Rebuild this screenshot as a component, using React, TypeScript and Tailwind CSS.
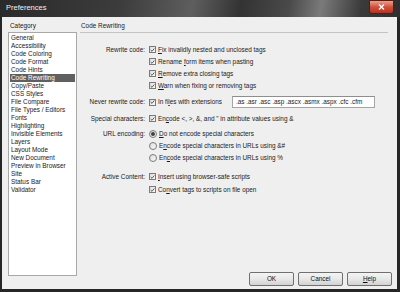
import type { ReactNode } from 'react';

const CATEGORIES = [
  'General',
  'Accessibility',
  'Code Coloring',
  'Code Format',
  'Code Hints',
  'Code Rewriting',
  'Copy/Paste',
  'CSS Styles',
  'File Compare',
  'File Types / Editors',
  'Fonts',
  'Highlighting',
  'Invisible Elements',
  'Layers',
  'Layout Mode',
  'New Document',
  'Preview in Browser',
  'Site',
  'Status Bar',
  'Validator',
];

function Check() {
  return (
    <span className="w-[7px] h-[7px] shrink-0 border border-[#7a7a7a] bg-gradient-to-br from-[#dcdcdc] to-[#fbfbfb] flex items-center justify-center">
      <svg width="6" height="6" viewBox="0 0 6 6">
        <path d="M0.8 3 L2.4 4.6 L5.2 1.2" fill="none" stroke="#3a3a3a" strokeWidth="1" />
      </svg>
    </span>
  );
}

function Radio({ on }: { on?: boolean }) {
  return (
    <span className="w-[8px] h-[8px] shrink-0 rounded-full border border-[#7a7a7a] bg-gradient-to-br from-[#dcdcdc] to-[#fbfbfb] flex items-center justify-center">
      {on && <span className="w-[4px] h-[4px] rounded-full bg-[#404040]" />}
    </span>
  );
}

function Row({ label, top, children }: { label?: string; top: string; children: ReactNode }) {
  return (
    <div className={`flex items-center h-[12px] ${top}`}>
      <span className="w-[69px] shrink-0 text-right pr-[4px] whitespace-nowrap">{label}</span>
      <div className="flex items-center gap-[2px] whitespace-nowrap">{children}</div>
    </div>
  );
}

function Btn({ children }: { children: ReactNode }) {
  return (
    <button className="w-[45px] h-[14px] rounded-[2px] border border-[#707070] bg-gradient-to-b from-[#f4f4f4] via-[#e8e8e8] to-[#d2d2d2] text-[6.4px] text-[#111] leading-none">
      {children}
    </button>
  );
}

export default function App() {
  return (
    <div className="w-[400px] h-[292px] flex flex-col bg-[#262626] overflow-hidden text-[6.4px] text-[#1a1a1a] font-['Liberation_Sans',Arial,sans-serif]">
      {/* Title bar */}
      <div className="relative h-[17px] shrink-0 bg-[linear-gradient(100deg,#2a2a2a_0%,#3c3c3c_30%,#5e5e5e_48%,#333_60%,#4a4a4a_72%,#7a7a7a_80%,#3a3a3a_90%,#2e2e2e_100%)]">
        <span className="absolute left-[6px] top-[4px] text-[7.5px] text-[#f0f0f0] leading-none">Preferences</span>
        <div className="absolute right-[6px] top-0 w-[25px] h-[14px] rounded-b-[3px] border border-[#5a1a12] bg-gradient-to-b from-[#e8a090] via-[#d0503c] to-[#b8301e] flex items-center justify-center">
          <svg width="7" height="6" viewBox="0 0 7 6">
            <path d="M1 0.5 L6 5.5 M6 0.5 L1 5.5" stroke="#fff" strokeWidth="1.4" />
          </svg>
        </div>
      </div>

      {/* Body */}
      <div className="flex-1 ml-[2px] mr-[3px] mb-[3px] bg-[#efefef] flex">
        {/* Category column */}
        <div className="w-[75px] shrink-0 pl-[6px] flex flex-col">
          <div className="mt-[5px] h-[8px] leading-[8px] pl-[2px]">Category</div>
          <div className="mt-[2px] h-[244px] border border-[#a8a8a8] bg-white pt-[1px] px-[1px]">
            {CATEGORIES.map((c) => (
              <div
                key={c}
                className={`h-[8px] leading-[8px] pl-[1px] whitespace-nowrap ${
                  c === 'Code Rewriting' ? 'bg-[#606060] text-white' : ''
                }`}
              >
                {c}
              </div>
            ))}
          </div>
        </div>

        {/* Settings panel */}
        <div className="flex-1 ml-[3px] mr-[5px] flex flex-col">
          <div className="mt-[5px] h-[8px] leading-[8px] pl-[1px]">Code Rewriting</div>
          <div className="mt-[2px] h-px bg-[#c4c4c4] mr-[4px]" />

          <Row label="Rewrite code:" top="mt-[11px]">
            <Check />
            <span><u>F</u>ix invalidly nested and unclosed tags</span>
          </Row>
          <Row top="mt-0">
            <Check />
            <span>Rename <u>f</u>orm items when pasting</span>
          </Row>
          <Row top="mt-0">
            <Check />
            <span><u>R</u>emove extra closing tags</span>
          </Row>
          <Row top="mt-0">
            <Check />
            <span><u>W</u>arn when fixing or removing tags</span>
          </Row>
          <Row label="Never rewrite code:" top="mt-[4px]">
            <Check />
            <span>In fi<u>l</u>es with extensions</span>
            <span className="ml-[8px] w-[143px] h-[12px] border border-[#a5a5a5] border-t-[#8e8e8e] bg-white flex items-center pl-[3px]">
              .as .asr .asc .asp .ascx .asmx .aspx .cfc .cfm
            </span>
          </Row>
          <Row label="Special characters:" top="mt-[5px]">
            <Check />
            <span>En<u>c</u>ode &lt;, &gt;, &amp;, and &quot; in attribute values using &amp;</span>
          </Row>
          <Row label="URL encoding:" top="mt-[3px]">
            <Radio on />
            <span><u>D</u>o not encode special characters</span>
          </Row>
          <Row top="mt-0">
            <Radio />
            <span>E<u>n</u>code special characters in URLs using &amp;#</span>
          </Row>
          <Row top="mt-0">
            <Radio />
            <span>En<u>c</u>ode special characters in URLs using %</span>
          </Row>
          <Row label="Active Content:" top="mt-[7px]">
            <Check />
            <span><u>I</u>nsert using browser-safe scripts</span>
          </Row>
          <Row top="mt-[1px]">
            <Check />
            <span>Co<u>n</u>vert tags to scripts on file open</span>
          </Row>

          <div className="mt-auto mb-[3px] flex justify-end gap-[4px]">
            <Btn>OK</Btn>
            <Btn>Cancel</Btn>
            <Btn>
              <u>H</u>elp
            </Btn>
          </div>
        </div>
      </div>
    </div>
  );
}
